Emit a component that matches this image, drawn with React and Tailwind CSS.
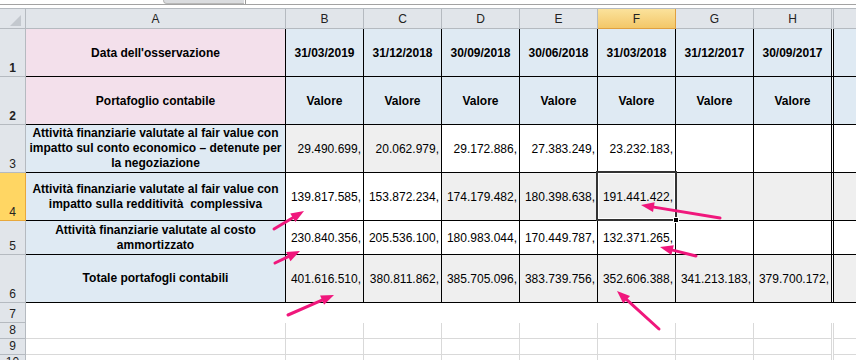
import React from 'react';

const BG = {
  g: 'bg-[#efefef]',
  w: 'bg-white',
  b: 'bg-[#dfeaf3]',
  p: 'bg-[#f3e0eb]',
};

const COL_W = ['w-[78px]', 'w-[78px]', 'w-[78px]', 'w-[78px]', 'w-[78px]', 'w-[78px]', 'w-[78px]'];
const LETTERS = ['B', 'C', 'D', 'E', 'F', 'G', 'H'];

const DATES = ['31/03/2019', '31/12/2018', '30/09/2018', '30/06/2018', '31/03/2018', '31/12/2017', '30/09/2017'];

// rows 3-6 of the table
const dataRows = [
  {
    n: '3',
    h: 'h-[48px]',
    label: ['Attività finanziarie valutate al fair value con', 'impatto sul conto economico – detenute per', 'la negoziazione'],
    values: ['29.490.699,', '20.062.979,', '29.172.886,', '27.383.249,', '23.232.183,', '', ''],
    bgs: ['g', 'g', 'w', 'w', 'w', 'w', 'w', 'w'],
  },
  {
    n: '4',
    h: 'h-[48px]',
    active: true,
    label: ['Attività finanziarie valutate al fair value con', 'impatto sulla redditività\u00a0 complessiva'],
    values: ['139.817.585,', '153.872.234,', '174.179.482,', '180.398.638,', '191.441.422,', '', ''],
    bgs: ['w', 'w', 'g', 'g', 'g', 'g', 'g', 'g'],
  },
  {
    n: '5',
    h: 'h-[34px]',
    label: ['Attività finanziarie valutate al costo', 'ammortizzato'],
    values: ['230.840.356,', '205.536.100,', '180.983.044,', '170.449.787,', '132.371.265,', '', ''],
    bgs: ['w', 'w', 'w', 'w', 'w', 'w', 'w', 'w'],
  },
  {
    n: '6',
    h: 'h-[48px]',
    label: ['Totale portafogli contabili'],
    values: ['401.616.510,', '380.811.862,', '385.705.096,', '383.739.756,', '352.606.388,', '341.213.183,', '379.700.172,'],
    bgs: ['g', 'g', 'g', 'g', 'g', 'g', 'g', 'g'],
  },
];

function RowHead({ n, active }) {
  return (
    <div
      className={`w-[26px] shrink-0 flex items-end justify-center pb-[2px] text-[12px] leading-[12px] text-[#222] border-r border-b ${
        active ? 'bg-[#ffd663] border-[#e8a83c]' : 'bg-[#e1e5ea] border-[#b5bac0]'
      }`}
    >
      {n}
    </div>
  );
}

function Arrow({ x1, y1, x2, y2 }) {
  const a = Math.atan2(y2 - y1, x2 - x1);
  const len = 13;
  const half = 5;
  const bx = x2 - len * Math.cos(a);
  const by = y2 - len * Math.sin(a);
  const px = -Math.sin(a) * half;
  const py = Math.cos(a) * half;
  return (
    <g>
      <line x1={x1} y1={y1} x2={bx} y2={by} stroke="#f0177c" strokeWidth="3" strokeLinecap="round" />
      <polygon points={`${x2},${y2} ${bx + px},${by + py} ${bx - px},${by - py}`} fill="#f0177c" />
    </g>
  );
}

function GridRow({ n, h }) {
  return (
    <div className={`flex ${h}`}>
      <RowHead n={n} />
      <div className="w-[260px] shrink-0 border-r border-b border-[#d9d9d9]" />
      {COL_W.map((w, i) => (
        <div key={i} className={`${w} shrink-0 border-r border-b border-[#d9d9d9]`} />
      ))}
      <div className="w-px shrink-0" />
      <div className="flex-1 border-l border-b border-[#d9d9d9]" />
    </div>
  );
}

export default function App() {
  return (
    <div className="relative w-[856px] h-[360px] overflow-hidden bg-white font-['Liberation_Sans',Arial,sans-serif] text-black select-none">
      {/* formula bar edge */}
      <div className="relative h-[4px] bg-white">
        <div className="absolute left-[163px] top-0 h-[4px] w-[81px] rounded-bl-[5px] bg-[#dadcdf] border-l border-b border-[#b8b8b8]" />
        <div className="absolute left-[245px] top-0 h-[4px] w-px bg-[#9a9a9a]" />
      </div>
      <div className="h-px bg-[#a3a3a3]" />
      <div className="h-[3px] bg-white" />

      {/* column headers */}
      <div className="flex h-[21px] border-t border-[#b5bac0] text-[12px] text-[#222]">
        <div className="relative w-[26px] shrink-0 bg-[#e1e5ea] border-r border-b border-[#b5bac0]">
          <svg className="absolute left-0 top-0" width="25" height="19" viewBox="0 0 25 19">
            <polygon points="10,17 21,17 21,6" fill="#c3c8ce" />
          </svg>
        </div>
        <div className="w-[260px] shrink-0 flex items-center justify-center pt-px bg-[#e1e5ea] border-r border-b border-[#b5bac0]">A</div>
        {LETTERS.map((l, i) => (
          <div
            key={l}
            className={`${COL_W[i]} shrink-0 flex items-center justify-center pt-px border-r border-b ${
              l === 'F'
                ? 'bg-gradient-to-b from-[#fbe29b] to-[#f3c768] border-[#e0a040]'
                : 'bg-[#e1e5ea] border-[#b5bac0]'
            }`}
          >
            {l}
          </div>
        ))}
        <div className="w-px shrink-0 bg-[#e1e5ea]" />
        <div className="flex-1 bg-[#e1e5ea] border-l border-b border-[#b5bac0]" />
      </div>

      {/* row 1 */}
      <div className="flex h-[48px] text-[12px] font-bold">
        <RowHead n="1" />
        <div className={`w-[260px] shrink-0 flex items-center justify-center border-r border-b border-black ${BG.p}`}>
          Data dell'osservazione
        </div>
        {DATES.map((d, i) => (
          <div key={d} className={`${COL_W[i]} shrink-0 flex items-center justify-center border-r border-b border-black ${BG.b}`}>
            {d}
          </div>
        ))}
        <div className="w-px shrink-0 bg-white border-b border-black" />
        <div className={`flex-1 border-l border-b border-black ${BG.b}`} />
      </div>

      {/* row 2 */}
      <div className="flex h-[48px] text-[12px] font-bold">
        <RowHead n="2" />
        <div className={`w-[260px] shrink-0 flex items-center justify-center border-r border-b border-black ${BG.p}`}>
          Portafoglio contabile
        </div>
        {DATES.map((d, i) => (
          <div key={d} className={`${COL_W[i]} shrink-0 flex items-center justify-center border-r border-b border-black ${BG.b}`}>
            Valore
          </div>
        ))}
        <div className="w-px shrink-0 bg-white border-b border-black" />
        <div className={`flex-1 border-l border-b border-black ${BG.b}`} />
      </div>

      {/* rows 3-6 */}
      {dataRows.map((r) => (
        <div key={r.n} className={`flex ${r.h} text-[12px]`}>
          <RowHead n={r.n} active={r.active} />
          <div className={`w-[260px] shrink-0 flex flex-col items-center justify-center font-bold leading-[15px] border-r border-b border-black ${BG.b}`}>
            {r.label.map((t) => (
              <span key={t} className="whitespace-nowrap">{t}</span>
            ))}
          </div>
          {r.values.map((v, i) => (
            <div
              key={i}
              className={`${COL_W[i]} shrink-0 flex items-center justify-end pr-[2px] overflow-hidden whitespace-nowrap border-r border-b border-black ${BG[r.bgs[i]]}`}
            >
              {v}
            </div>
          ))}
          <div className="w-px shrink-0 bg-white border-b border-black" />
          <div className={`flex-1 border-l border-b border-black ${BG[r.bgs[7]]}`} />
        </div>
      ))}

      {/* row 7, no gridlines */}
      <div className="flex h-[20px]">
        <RowHead n="7" />
        <div className="flex-1" />
      </div>
      <GridRow n="8" h="h-[16px]" />
      <GridRow n="9" h="h-[16px]" />
      <GridRow n="10" h="h-[16px]" />

      {/* active cell F4 */}
      <div className="absolute left-[596px] top-[171px] w-[81px] h-[50px] border-2 border-[#333] shadow-[inset_0_0_0_1px_#ffffff]" />
      <div className="absolute left-[673px] top-[217px] w-[6px] h-[6px] bg-black border border-white" />

      {/* annotations */}
      <svg className="absolute left-0 top-0 pointer-events-none" width="856" height="360" viewBox="0 0 856 360">
        <Arrow x1={274} y1={229} x2={304} y2={211} />
        <Arrow x1={275} y1={263} x2={300} y2={251} />
        <Arrow x1={288} y1={315} x2={334} y2={295} />
        <Arrow x1={720} y1={218} x2={641} y2={205} />
        <Arrow x1={696} y1={256} x2={660} y2={247} />
        <Arrow x1={659} y1={329} x2={617} y2={291} />
      </svg>
    </div>
  );
}
